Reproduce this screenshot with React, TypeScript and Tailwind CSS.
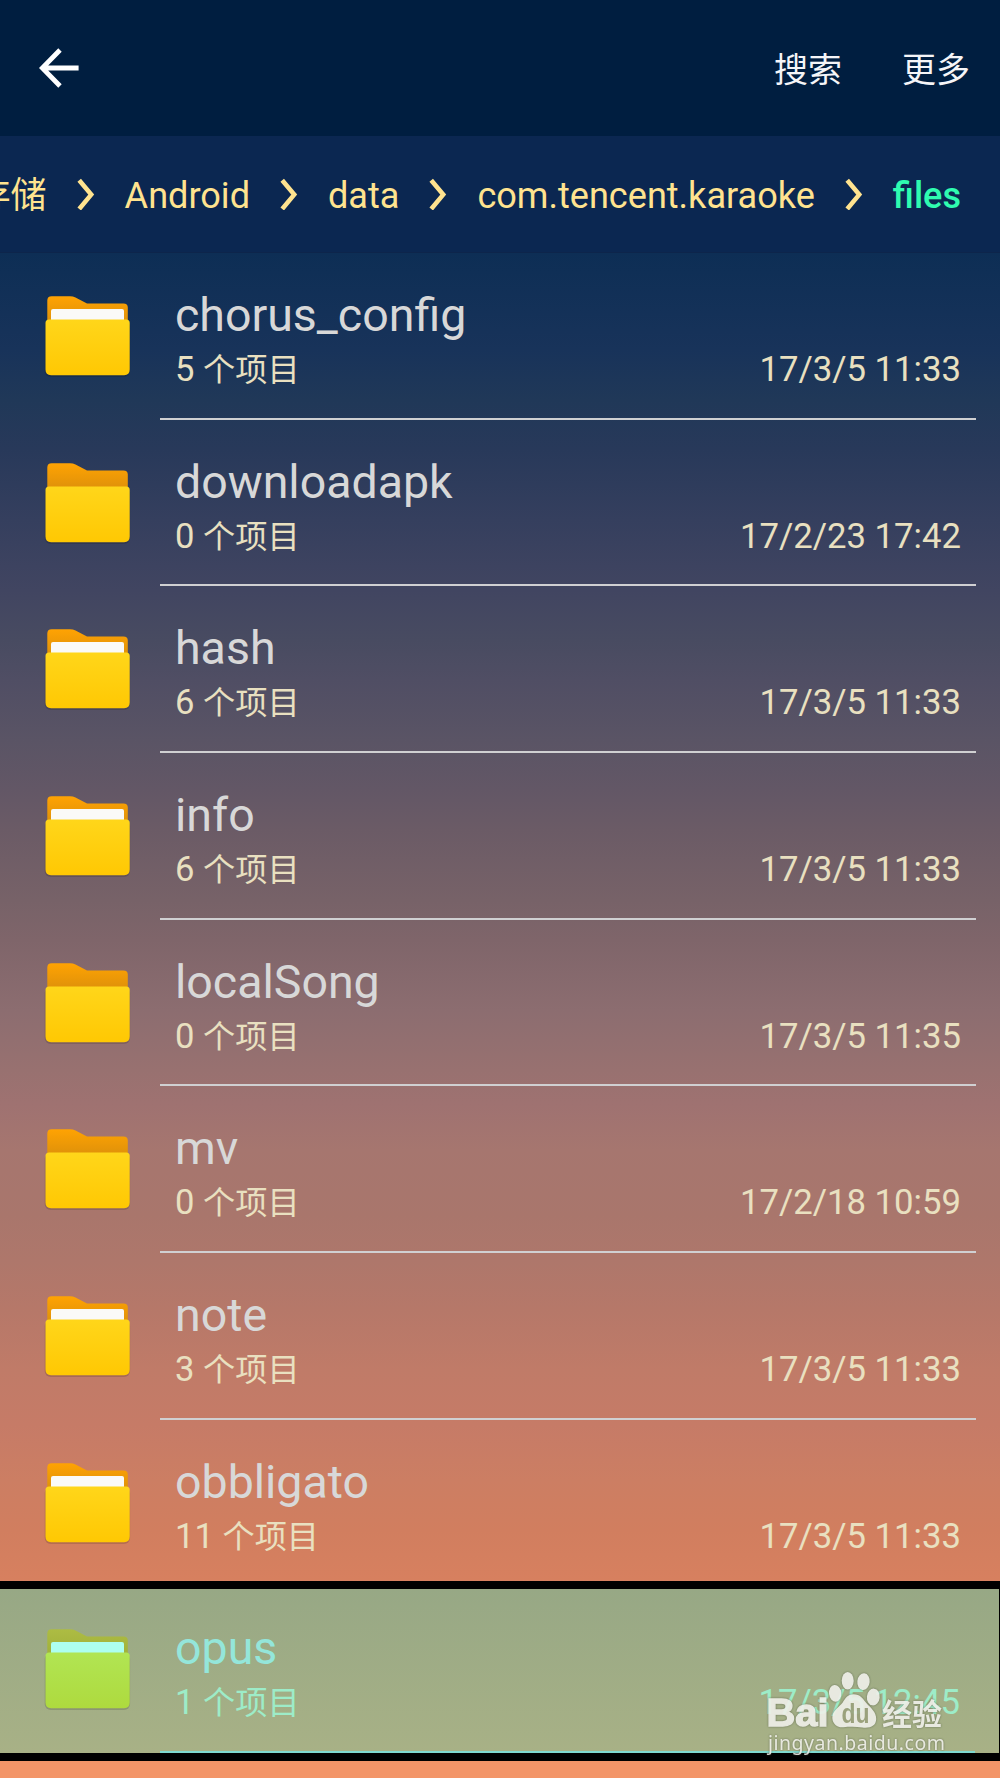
import { useId } from "react"

// --- Data ------------------------------------------------------------------
interface Entry {
  name: string
  count: number
  modified: string
}

const ENTRIES: readonly Entry[] = [
  { name: "chorus_config", count: 5, modified: "17/3/5 11:33" },
  { name: "downloadapk", count: 0, modified: "17/2/23 17:42" },
  { name: "hash", count: 6, modified: "17/3/5 11:33" },
  { name: "info", count: 6, modified: "17/3/5 11:33" },
  { name: "localSong", count: 0, modified: "17/3/5 11:35" },
  { name: "mv", count: 0, modified: "17/2/18 10:59" },
  { name: "note", count: 3, modified: "17/3/5 11:33" },
  { name: "obbligato", count: 11, modified: "17/3/5 11:33" },
  { name: "opus", count: 1, modified: "17/3/5 12:45" },
]

const CRUMBS = ["内部存储", "Android", "data", "com.tencent.karaoke", "files"]

// --- Icons -----------------------------------------------------------------
function BackArrow() {
  return (
    <svg className="h-10 w-10" viewBox="0 0 40 40" fill="none" stroke="#fff" strokeWidth="4.8">
      <path d="M39.6 20H4M21 2 3.300 20 21 38" />
    </svg>
  )
}

function Chevron() {
  return (
    <svg className="h-8 w-[18px] shrink-0" viewBox="0 0 18 32" fill="none" stroke="#ffe38f" strokeWidth="4.6">
      <path d="M2.2 2.2 14.2 16.6 2.2 31" />
    </svg>
  )
}

/** Folder glyph; a non-empty folder shows a sheet of paper behind the front. */
function Folder({ filled, marked }: { filled: boolean; marked: boolean }) {
  const id = useId()
  const back = marked ? ["#adbc43", "#a0b03a"] : ["#ffa303", "#dd900a"]
  const front = marked ? ["#b1e553", "#aeda3e"] : ["#ffd61a", "#ffc803"]
  return (
    <svg className="h-[84px] w-[88px] shrink-0" viewBox="0 0 88 84">
      <defs>
        <linearGradient id={`${id}b`} x1="0" y1="0" x2="0" y2="1">
          <stop offset="0" stopColor={back[0]} />
          <stop offset="1" stopColor={back[1]} />
        </linearGradient>
        <linearGradient id={`${id}f`} x1="0" y1="0" x2="0" y2="1">
          <stop offset="0" stopColor={front[0]} />
          <stop offset="1" stopColor={front[1]} />
        </linearGradient>
      </defs>
      <rect x="0.7" y="25" width="85.4" height="57" rx="6" fill="#000" fillOpacity="0.14" />
      <path
        d="M3.3 28V5.5q0-4.3 4.4-4.3H26q3 0 5.5 1.4L43 8.4h36.4q4.4 0 4.4 4.2V28z"
        fill={`url(#${id}b)`}
      />
      {filled && <rect x="7" y="14" width="73" height="16" rx="2" fill={marked ? "#adfff0" : "#fafaf8"} />}
      <path
        d="M1.5 28q0-3.5 3.5-3.5h77.2q3.5 0 3.5 3.5v46.6q0 5.6-5.6 5.6h-73q-5.6 0-5.6-5.6z"
        fill={`url(#${id}f)`}
      />
    </svg>
  )
}

// --- Watermark -------------------------------------------------------------
function Watermark() {
  return (
    <div className="absolute top-[1668px] left-[766px] h-[90px] w-[182px] text-[#f0f0ea] opacity-90 drop-shadow-[0_0_1px_rgba(70,80,60,0.7)]">
      <svg className="h-full w-full overflow-visible" viewBox="0 0 182 90" fill="currentColor">
        <text
          x="0.5"
          y="58"
          fontSize="39.5"
          fontWeight="700"
          fontFamily="Liberation Sans, Arial, sans-serif"
          stroke="currentColor"
          strokeWidth="1.4"
          textLength="62"
          lengthAdjust="spacingAndGlyphs"
        >
          Bai
        </text>
        <ellipse cx="69.2" cy="25.3" rx="6.2" ry="8.4" transform="rotate(-6 69.2 25.3)" />
        <ellipse cx="81.7" cy="12.7" rx="6" ry="8.8" />
        <ellipse cx="97.5" cy="13.7" rx="6.2" ry="8.4" transform="rotate(6 97.5 13.7)" />
        <ellipse cx="107.3" cy="29" rx="6.4" ry="8.4" transform="rotate(6 107.3 29)" />
        <path d="M87.5 26.3c-6 0-8 4-11 8.5-3 4-10.5 8-10.2 15.2.4 6.5 5.5 9.8 11 9.3 6-.6 13-.6 19 .2 8 1 13.7-1.5 13.9-8.5.2-7-5.7-11.2-9.7-15.7-4-5-6-9-13-9z" />
        <text
          x="75.5"
          y="55"
          fontSize="28"
          fontWeight="700"
          fill="#9aa07c"
          fontFamily="Liberation Sans, Arial, sans-serif"
          textLength="28"
          lengthAdjust="spacingAndGlyphs"
        >
          du
        </text>
        <text x="116" y="56.5" fontSize="30" fontWeight="700" fontFamily="Noto Sans CJK SC, sans-serif">
          经验
        </text>
        <text x="2" y="82" fontSize="19.5" fontFamily="Noto Sans, sans-serif" textLength="177" lengthAdjust="spacing">
          jingyan.baidu.com
        </text>
      </svg>
    </div>
  )
}

// --- List ------------------------------------------------------------------
function EntryRow({ entry, marked = false }: { entry: Entry; marked?: boolean }) {
  return (
    <li className="flex h-[166.67px] shrink-0 pr-6 pl-11">
      <div className="w-[116px] shrink-0 pt-[42px]">
        <Folder filled={entry.count > 0} marked={marked} />
      </div>
      <div
        className={`flex grow flex-col border-b-2 pt-8 pr-[15px] pl-[15px] ${
          marked ? "border-[#7fd9cf]" : "border-[#d0d0d2]"
        }`}
      >
        <span className={`text-[46.5px] leading-[60px] ${marked ? "text-[#94e6da]" : "text-[#d8d8d8]"}`}>
          {entry.name}
        </span>
        <div
          className={`mt-px flex justify-between leading-[47px] ${marked ? "text-[#9decc8]" : "text-[#e9e0c0]"}`}
        >
          <span className="text-[34.6px]">
            {entry.count} <span className="text-[32.2px]">个项目</span>
          </span>
          <span className="text-[34.7px]">{entry.modified}</span>
        </div>
      </div>
    </li>
  )
}

export default function App() {
  return (
    <div className="relative flex h-[1778px] w-[1000px] flex-col overflow-hidden bg-[linear-gradient(to_bottom,#0d2e55_253px,#18335a_350px,#203858_400px,#28395a_450px,#353f5e_520px,#414561_590px,#484b61_640px,#504e64_680px,#5a5465_740px,#635766_790px,#6b5b66_830px,#776268_900px,#7f656a_940px,#8c6d70_1010px,#987170_1070px,#9f7271_1105px,#a6766f_1150px,#a9766c_1215px,#ae776b_1260px,#b67869_1310px,#c07b68_1370px,#c67b67_1425px,#cc7e63_1480px,#d17e5f_1530px,#d7805f_1580px,#f39568_1762px,#f39568_1778px)] font-['Roboto','Noto_Sans_CJK_SC',sans-serif]">
      <header className="flex h-[136px] shrink-0 items-center justify-between bg-[#001e40] pr-[30px] pl-[39px] text-[34px] text-[#f5f5f8]">
        <BackArrow />
        <nav className="flex gap-[60px] pt-1">
          <span>搜索</span>
          <span>更多</span>
        </nav>
      </header>

      <nav className="flex h-[117px] shrink-0 items-center justify-end gap-[30px] border-b border-[#0d254b] bg-[#0b2751] pr-[39px] text-[36.1px] text-[#ffe38f]">
        {CRUMBS.map((crumb, i) => (
          <div key={crumb} className="flex shrink-0 items-center gap-[30px]">
            {i > 0 && <Chevron />}
            <span className={i === CRUMBS.length - 1 ? "pt-[5px] font-medium text-[#2ffbb0]" : "pt-[5px]"}>{crumb}</span>
          </div>
        ))}
      </nav>

      <ul className="flex flex-col">
        {ENTRIES.slice(0, -1).map((entry) => (
          <EntryRow key={entry.name} entry={entry} />
        ))}
      </ul>

      {/* Highlighted entry */}
      <div className="absolute top-[1581px] left-0 h-[180px] w-[1000px] overflow-hidden border-y-8 border-r border-black bg-linear-to-b from-[#97a885] to-[#a8b186]">
        <ul className="-mt-[3px] flex flex-col">
          <EntryRow entry={ENTRIES[ENTRIES.length - 1]} marked />
        </ul>
      </div>

      <Watermark />
    </div>
  )
}
